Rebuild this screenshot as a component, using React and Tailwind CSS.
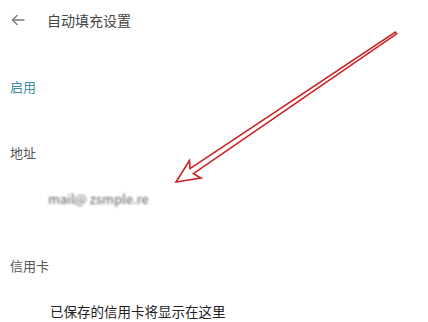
import React from 'react';

function BackIcon() {
  return (
    <svg width="14" height="12" viewBox="0 0 14 12" fill="none" stroke="#777" strokeWidth="1.4" strokeLinecap="round" strokeLinejoin="round">
      <path d="M13 6H1.5" />
      <path d="M6 1.5L1.5 6L6 10.5" />
    </svg>
  );
}

// red annotation arrow laid over the page
function RedArrow() {
  return (
    <svg className="absolute left-0 top-0 pointer-events-none" width="428" height="322" viewBox="0 0 428 322">
      <polygon
        points="176,182 189.5,160.5 190,168.6 395.4,32.2 396.6,33.8 193.4,173.6 201,178"
        fill="#fff"
        stroke="#cc1f1f"
        strokeWidth="1.6"
        strokeLinejoin="miter"
      />
    </svg>
  );
}

export default function App() {
  return (
    <div className="relative w-[428px] h-[322px] overflow-hidden bg-white font-['Noto_Sans_CJK_SC','Noto_Sans',sans-serif]">
      <div className="flex h-[40px] items-center pl-[11px]">
        <BackIcon />
        <span className="ml-[22px] text-[14px] leading-[20px] text-[#444]">自动填充设置</span>
      </div>

      <div className="mt-[37px] pl-[10px] text-[13px] leading-[20px] text-[#3f8da2]">启用</div>

      <div className="mt-[46px] pl-[10px] text-[13px] leading-[20px] text-[#555]">地址</div>

      <div className="mt-[26px] pl-[48px] text-[13px] leading-[20px] text-[#5a5a5a] blur-[1.2px] select-none">
        mail@ zsmple.re
      </div>

      <div className="mt-[47px] pl-[10px] text-[13px] leading-[20px] text-[#555]">信用卡</div>

      <div className="mt-[25px] pl-[50px] text-[13.5px] leading-[20px] text-[#222]">已保存的信用卡将显示在这里</div>

      <RedArrow />
    </div>
  );
}
